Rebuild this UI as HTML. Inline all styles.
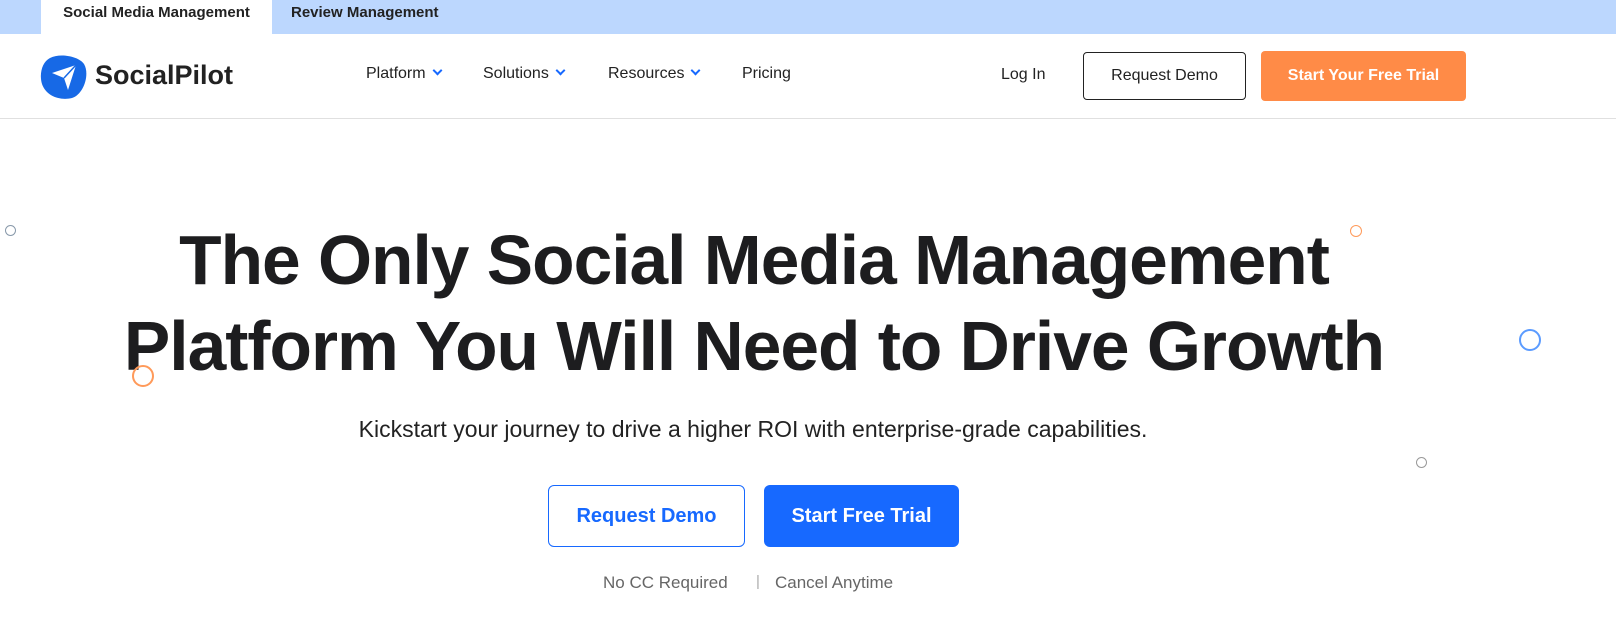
<!DOCTYPE html>
<html><head><meta charset="utf-8"><style>
*{margin:0;padding:0;box-sizing:border-box}
body{width:1616px;height:642px;background:#fff;font-family:"Liberation Sans",sans-serif;color:#1d1d1f;position:relative;overflow:hidden}
.top{position:absolute;left:0;top:0;width:1616px;height:34px;background:#bcd7fe}
.tab{position:absolute;top:0;height:34px;line-height:25px;font-size:15px;font-weight:bold;color:#222}
.nav{position:absolute;top:34px;left:0;width:1616px;height:85px;border-bottom:1px solid #e0e0e0}
.a{position:absolute;font-size:16px;color:#222}
.chev{display:inline-block;width:7px;height:7px;border-right:2px solid #1769ff;border-bottom:2px solid #1769ff;transform:rotate(45deg);margin-left:8px;position:relative;top:-4px}
.btn{position:absolute;border-radius:4px;text-align:center;font-size:16px}
h1{position:absolute;left:-54px;width:1616px;top:217px;text-align:center;font-size:69.5px;line-height:86px;font-weight:bold;letter-spacing:-1px;color:#1d1d1f}
.sub{position:absolute;top:416px;text-align:center;font-size:23px;color:#222}
.c{position:absolute;border-radius:50%}
</style></head><body>
<div class="top"></div>
<div class="tab" style="left:41px;width:231px;background:#fff;text-align:center">Social Media Management</div>
<div class="tab" style="left:291px">Review Management</div>
<div class="nav">
<svg style="position:absolute;left:40px;top:20px" width="48" height="46" viewBox="0 0 48 46"><path d="M10 4 C20 -1 38 2 44 10 C50 20 44 40 32 44 C20 47 6 42 2 30 C-1 20 2 8 10 4Z" fill="#1769e6"/><path d="M12 19 L36 11 L28 36 L24 24 Z" fill="#fff"/><path d="M24 24 L36 11" stroke="#1769e6" stroke-width="1.5"/></svg>
<div class="a" style="left:95px;top:26px;font-size:27px;font-weight:bold;color:#222">SocialPilot</div>
<div class="a" style="left:366px;top:31px">Platform<span class="chev"></span></div>
<div class="a" style="left:483px;top:31px">Solutions<span class="chev"></span></div>
<div class="a" style="left:608px;top:31px">Resources<span class="chev"></span></div>
<div class="a" style="left:742px;top:31px">Pricing</div>
<div class="a" style="left:1001px;top:32px">Log In</div>
<div class="btn" style="left:1083px;top:18px;width:163px;height:48px;border:1px solid #222;line-height:46px;color:#222">Request Demo</div>
<div class="btn" style="left:1261px;top:17px;width:205px;height:50px;background:#ff8b47;color:#fff;font-weight:bold;line-height:50px">Start Your Free Trial</div>
</div>
<h1>The Only Social Media Management<br>Platform You Will Need to Drive Growth</h1>
<div class="sub" style="left:0;width:1506px">Kickstart your journey to drive a higher ROI with enterprise-grade capabilities.</div>
<div class="btn" style="left:548px;top:485px;width:197px;height:62px;border:1px solid #1769ff;border-radius:6px;color:#1769ff;font-size:20px;font-weight:bold;line-height:60px">Request Demo</div>
<div class="btn" style="left:764px;top:485px;width:195px;height:62px;background:#1769ff;border-radius:6px;color:#fff;font-size:20px;font-weight:bold;line-height:62px">Start Free Trial</div>
<div class="a" style="left:603px;top:573px;font-size:17px;color:#666">No CC Required</div>
<div class="a" style="left:756px;top:573px;font-size:15px;color:#aaa">|</div>
<div class="a" style="left:775px;top:573px;font-size:17px;color:#666">Cancel Anytime</div>
<div class="c" style="left:5px;top:225px;width:11px;height:11px;border:1.5px solid #8899aa"></div>
<div class="c" style="left:1350px;top:225px;width:12px;height:12px;border:1.5px solid #ff9a5a"></div>
<div class="c" style="left:1519px;top:329px;width:22px;height:22px;border:2px solid #5b9bff"></div>
<div class="c" style="left:132px;top:365px;width:22px;height:22px;border:2px solid #ff9a5a"></div>
<div class="c" style="left:1416px;top:457px;width:11px;height:11px;border:1.5px solid #999"></div>
</body></html>
